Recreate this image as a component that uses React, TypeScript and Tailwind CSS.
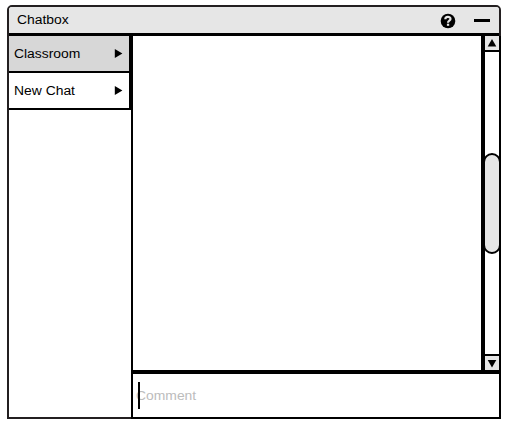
const rooms = [
  { name: 'Classroom', active: true },
  { name: 'New Chat', active: false },
];

function RoomTab({ name, active }: { name: string; active: boolean }) {
  return (
    <button
      className={`flex h-[37px] w-[124px] items-center justify-between border-r-4 border-b-2 border-black pr-[6px] pl-[5px] text-left ${
        active ? 'bg-[#d7d7d7]' : 'bg-white'
      }`}
    >
      <span className="inline-block origin-left scale-x-[1.03]">{name}</span>
      <svg width="9" height="9" viewBox="0 0 9 9" className="block">
        <path d="M0.8 0 L8.4 4.5 L0.8 9 Z" fill="#000" />
      </svg>
    </button>
  );
}

function Scrollbar() {
  return (
    <div className="flex w-[18px] flex-col border-l-4 border-black">
      <div className="flex h-4 items-start justify-center border-b-2 border-black bg-[#e6e6e6] pt-[3px]">
        <svg width="10" height="8" viewBox="0 0 10 8">
          <path d="M5 0 L9.3 7.4 H0.7 Z" fill="#000" />
        </svg>
      </div>
      <div className="flex-1 pt-[101px]">
        <div className="relative z-10 -mr-[2px] -ml-[2px] h-[101px] rounded-[9px] border-2 border-black bg-[#e6e6e6]" />
      </div>
      <div className="flex h-4 items-start justify-center border-t-2 border-black bg-[#e6e6e6] pt-1">
        <svg width="10" height="8" viewBox="0 0 10 8">
          <path d="M5 7.6 L9.3 0 H0.7 Z" fill="#000" />
        </svg>
      </div>
    </div>
  );
}

export default function App() {
  return (
    <div className="h-[425px] w-[506px] bg-white pt-[5px] pl-[7px] font-['Liberation_Sans',Arial,sans-serif] text-[13.49px] leading-4 text-black">
      <div className="flex h-[414px] w-[494px] flex-col rounded-t-[5px] border-2 border-[#231f20]">
        <header className="flex h-[29px] items-center rounded-t-[3px] border-b-[3px] border-black bg-[#e6e6e6] pr-[9px] pl-2">
          <span className="inline-block origin-left scale-x-[1.03]">Chatbox</span>
          <svg width="16" height="16" viewBox="0 0 16 16" className="mt-[2px] mr-[18px] ml-auto">
            <circle cx="8" cy="8" r="7.3" fill="#000" />
            <path
              d="M5.3 6.3 C5.3 3.1 10.5 3.1 10.5 6 C10.5 7.7 8 7.7 8 9.7"
              fill="none"
              stroke="#e6e6e6"
              strokeWidth="2.2"
            />
            <rect x="6.9" y="10.7" width="2.3" height="2.1" fill="#e6e6e6" />
          </svg>
          <span className="h-[3px] w-4 bg-black" />
        </header>
        <div className="flex min-h-0 flex-1">
          <nav className="w-[122px]">
            {rooms.map((room) => (
              <RoomTab key={room.name} {...room} />
            ))}
          </nav>
          <main className="-mr-[2px] -mb-[2px] flex flex-1 flex-col border-r-2 border-b-2 border-l-2 border-black">
            <div className="flex flex-1">
              <section className="flex-1" />
              <Scrollbar />
            </div>
            <footer className="flex h-[47px] items-start border-t-4 border-black pt-2 pl-[5px]">
              <span className="relative z-10 h-[27px] w-[2px] bg-black" />
              <span className="mt-[6px] -ml-1 inline-block origin-left scale-x-[1.03] text-[#bcbcbc]">
                Comment
              </span>
            </footer>
          </main>
        </div>
      </div>
    </div>
  );
}
